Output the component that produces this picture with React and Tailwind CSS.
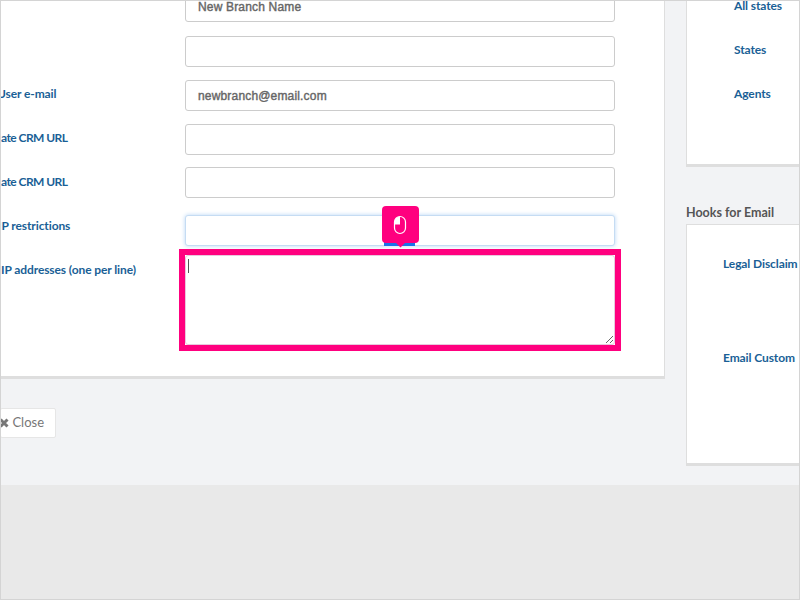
const fl = "font-['Lato',sans-serif]";
function Field({ label, labelClass = "w-[184px]", value = "", focus = false, className = "" }) {
  return (
    <div className={`flex h-[31px] shrink-0 items-start ${className}`}>
      <div className={`shrink-0 whitespace-nowrap text-[12px] font-bold leading-[16px] tracking-[-0.1px] text-[#1a5f96] ${labelClass}`}>{label}</div>
      <div className={`flex h-[31px] w-[430px] items-center rounded-[3px] border bg-white px-[12px] font-['Liberation_Sans',sans-serif] text-[12px] tracking-[0.17px] text-[#666] [-webkit-text-stroke:0.4px_#666] ${focus ? "border-[#c5dcf3] shadow-[0_0_4px_#b8d6f5]" : "border-[#ccc]"}`}>{value}</div>
    </div>
  );
}
function SideRow({ label, className }) {
  return <div className={`whitespace-nowrap text-[12px] font-bold leading-[16px] tracking-[-0.1px] text-[#1a5f96] ${className}`}>{label}</div>;
}
export default function App() {
  return (
    <div className={`relative h-[600px] w-[800px] overflow-hidden border border-[#d4d4d4] bg-[#e9e9e9] ${fl}`}>
      <div className="flex h-[484px] bg-[#f2f3f5]">
        <div className="flex w-[664px] shrink-0 flex-col">
          <div className="h-[378px] shrink-0 overflow-hidden border-r border-b-[3px] border-[#dedede] bg-white">
            <div className="-mt-[10px] flex flex-col gap-[13px]">
              <Field className="mb-[1px]" value="New Branch Name" />
              <Field />
              <Field label="User e-mail" labelClass="-ml-[4px] w-[188px] pt-[6px]" value="newbranch@email.com" />
              <Field label="ate CRM URL" labelClass="w-[184px] pt-[6px] tracking-[-0.55px]" />
              <Field className="-mt-[1px]" label="ate CRM URL" labelClass="w-[184px] pt-[7px] tracking-[-0.55px]" />
              <Field className="mt-[4px]" label="IP restrictions" labelClass="-ml-[3px] w-[187px] pt-[3px]" focus />
              <div className="relative -mt-[4px] flex items-start">
                <div className="w-[184px] shrink-0 whitespace-nowrap pt-[7px] text-[12px] font-bold leading-[16px] tracking-[-0.1px] text-[#1a5f96]">IP addresses (one per line)</div>
                <div className="h-[90px] w-[430px] outline-[6px] outline-[#ff007f]">
                  <textarea defaultValue="" className="block h-[90px] w-[430px] resize rounded-[3px] border border-[#e8c8dc] bg-white outline-none" />
                </div>
                <div className="absolute left-[187px] top-[4px] h-[14px] w-px bg-[#555]" />
              </div>
            </div>
          </div>
          <div className="mt-[29px]">
            <div className="-ml-px flex h-[30px] w-[56px] items-center justify-end rounded-[2px] border border-[#e6e6e6] bg-white pr-[11px] text-[13px] text-[#777]">
              <svg viewBox="0 0 10 10" className="mr-[3px] h-[10px] w-[10px] shrink-0"><path d="M1.5 1.5l7 7M8.5 1.5l-7 7" stroke="#777" strokeWidth="3" /></svg>Close
            </div>
          </div>
        </div>
        <div className="ml-[21px] flex-1 overflow-hidden">
          <div className="flex h-[166px] flex-col border-b-[3px] border-l border-[#dedede] bg-white pl-[47px]">
            <SideRow label="All states" className="-mt-[3px]" />
            <SideRow label="States" className="mt-[28px]" />
            <SideRow label="Agents" className="mt-[28px]" />
          </div>
          <div className="mt-[38px] text-[12.5px] font-bold leading-[16px] text-[#555]">Hooks for Email</div>
          <div className="mt-[3px] flex h-[242px] flex-col border-b-[3px] border-l border-t border-[#dedede] bg-white pl-[36px]">
            <SideRow label="Legal Disclaim" className="mt-[31px]" />
            <SideRow label="Email Custom" className="mt-[78px]" />
          </div>
        </div>
      </div>
      <div className="absolute left-[383px] top-[240px] h-[5px] w-[31px] bg-[#1a73e8]" />
      <div className="absolute left-[381px] top-[205px] flex h-[37px] w-[37px] items-center justify-center rounded-[4px] bg-[#ff007f]">
        <svg viewBox="0 0 14 20" className="mr-[1px] h-[20px] w-[14px]" fill="none">
          <rect x="1.5" y="1.5" width="11" height="17" rx="5.5" stroke="white" strokeWidth="1.2" />
          <path d="M7 1.5A5.5 5.5 0 0 0 1.5 7V9.5H7Z" fill="white" />
        </svg>
        <div className="absolute left-[15px] top-[33px] h-[7px] w-[7px] rotate-45 bg-[#ff007f]" />
      </div>
    </div>
  );
}
